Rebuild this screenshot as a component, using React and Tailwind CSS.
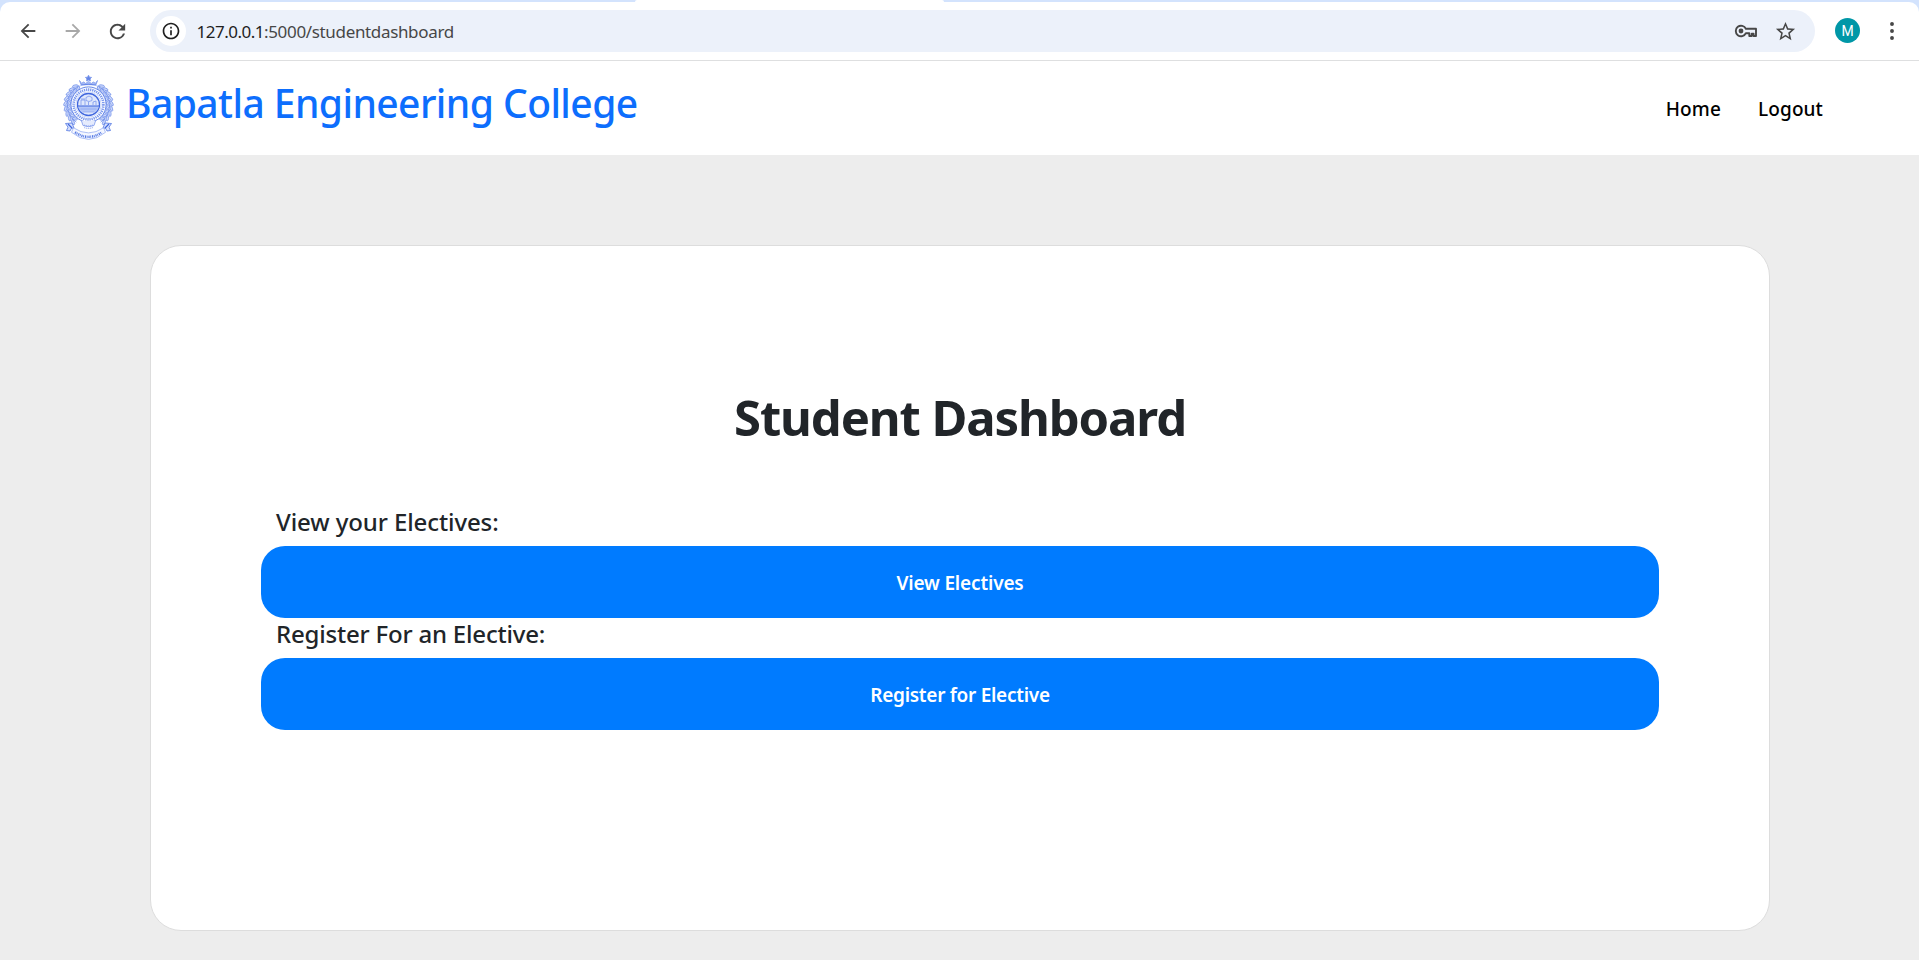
import { MdArrowBack, MdArrowForward, MdInfoOutline, MdRefresh, MdStarBorder } from "react-icons/md";

function KeyIcon() {
  return (
    <svg className="h-[14px] w-6" viewBox="0 0 24 14" fill="none" stroke="#474747" strokeWidth="1.9">
      <path d="M11.9 4.8A5.3 5.3 0 1 0 11.9 9.2H15.3V12H17.7V9.8H19.6V12H22V4.8Z" strokeLinejoin="round" />
      <circle cx="7" cy="7" r="2.4" fill="#474747" stroke="none" />
    </svg>
  );
}

function DotsIcon() {
  return (
    <svg className="h-[18px] w-1" viewBox="0 0 4 18" fill="#474747">
      <circle cx="2" cy="2" r="1.95" />
      <circle cx="2" cy="9" r="1.95" />
      <circle cx="2" cy="16" r="1.95" />
    </svg>
  );
}

const LEAF_ANGLES = [-48, -35, -22, -9, 4, 17, 30, 43, 55];

function Wreath() {
  return LEAF_ANGLES.map((a) => (
    <g key={a} transform={`rotate(${-a} 25.5 30)`}>
      <ellipse cx="45" cy="29" rx="2.9" ry="1.2" transform="rotate(-55 45 29)" />
      <ellipse cx="48.6" cy="30" rx="2.8" ry="1.2" transform="rotate(-115 48.6 30)" />
      <path d="M46.400 27.500v5" />
    </g>
  ));
}

function Emblem() {
  return (
    <svg className="h-[66px] w-[51px] overflow-visible" viewBox="0 0 51 66" fill="none" stroke="#7593eb" strokeWidth="0.75">
      {/* crown */}
      <path d="M25.5 0.2l1 2 2.1.2-1.5 1.5.4 2-2-.9-2 .9.4-2-1.5-1.5 2.1-.2z" fill="#6585e6" />
      <path d="M16.5 5.5l2 2.8 2.2-1.3 2 1.5 2.8-2.3 2.8 2.3 2-1.5 2.2 1.3 2-2.8-1.5 4.2h-15z" fill="#a9bdf5" />
      <path d="M17.5 10.3q8-2.3 16 0" stroke="#5478e4" />
      {/* laurel */}
      <g fill="#c9d6fa">
        <Wreath />
        <g transform="translate(51 0) scale(-1 1)">
          <Wreath />
        </g>
      </g>
      {/* seal */}
      <circle cx="25.5" cy="29.5" r="17.6" fill="#fff" stroke="#5579e4" strokeWidth="0.9" />
      <circle cx="25.5" cy="29.5" r="14.9" stroke="#7d9aee" strokeWidth="2.6" strokeDasharray="1.3 0.8" />
      <circle cx="25.5" cy="29.5" r="12.7" stroke="#a9bdf5" strokeWidth="0.6" />
      <circle cx="25.5" cy="29.5" r="11" fill="#dfe7fc" stroke="#3f66de" strokeWidth="1.3" />
      <path d="M15 31h21a10.6 10.6 0 0 1-3.2 6H18.2a10.6 10.6 0 0 1-3.2-6z" fill="#b3c5f7" stroke="none" />
      <path d="M15 31h21" stroke="#4a70e0" strokeWidth="1.1" />
      <path d="M18 30v-5h4v5M23 22.5l3-1.5 3 1.5v3l-3 1-3-1zM30 30v-3l3-1v4M25.5 27v3M19 25v-2M21 25v-2" />
      <path d="M17.5 34h16M20 37h11" stroke="#8da6f0" />
      {/* base ornament */}
      <path d="M18.5 46l1.5 4.500q5.500 2.500 11 0L32.500 46" fill="#e5ebfd" />
      <path d="M21 50q4.5 1.8 9 0M21 52.5q4.5 1.8 9 0" strokeDasharray="1.3 0.7" />
      {/* ribbon */}
      <path
        d="M2.5 48.5l6.5-.5 2 5q-3.5-.5-4 3l-3.5-.5 1.5-3.300zM48.500 48.500l-6.500-.5-2 5q3.500-.5 4 3l3.500-.5-1.500-3.300z"
        fill="#d6e0fc"
        stroke="#4a70e0"
      />
      <path d="M5 49l4 4M46 49l-4 4" stroke="#3f66de" strokeWidth="1.2" />
      <path d="M10.5 52.8Q25.5 63 40.5 52.8l2 4.5Q25.5 71.500 8.500 57.300z" fill="#f4f7ff" stroke="#93abf1" />
      <path d="M12 57.2Q25.5 66.5 39 57.2" stroke="#5579e4" strokeWidth="2.4" strokeDasharray="1.2 0.7 0.8 0.9" />
    </svg>
  );
}

function BrowserBar() {
  return (
    <div className="bg-[#d3e3fd]">
      <div className="h-[2px] pl-[635px]">
        <div className="h-[2px] w-[309px] rounded-t-[2px] bg-white" />
      </div>
      <div className="flex h-[59px] items-start rounded-t-[10px] border-b border-[#dedfe0] bg-white pt-2">
        <div className="flex h-[42px] w-[150px] items-center pl-[17px] text-[22px] text-[#474747]">
          <MdArrowBack />
          <MdArrowForward className="ml-[22.500px] text-[#a8a8a8]" />
          <MdRefresh className="ml-[22.500px] text-[23px]" />
        </div>
        <div className="flex h-[42px] w-[1665px] items-center rounded-full bg-[#ecf1fa] pr-[18.5px] pl-[6px]">
          <div className="flex size-[30px] items-center justify-center rounded-full bg-white">
            <MdInfoOutline className="text-[20px] text-[#1f1f1f]" />
          </div>
          <p className="ml-[10.5px] pt-px text-[17px] leading-6 text-[#474747]">
            <span className="tracking-[-0.5px] text-[#1f1f1f]">127.0.0.1</span>
            <span className="tracking-[-0.34px]">:5000/studentdashboard</span>
          </p>
          <div className="ml-auto flex items-center gap-[16px] text-[#474747]">
            <KeyIcon />
            <MdStarBorder className="text-[23px]" />
          </div>
        </div>
        <div className="mt-2 ml-5 flex size-[25px] items-center justify-center rounded-full bg-[#0097a7] font-['Roboto',sans-serif] text-[14px] leading-none text-white">
          M
        </div>
        <div className="mt-3 ml-[30px]">
          <DotsIcon />
        </div>
      </div>
    </div>
  );
}

function Navbar() {
  return (
    <nav className="flex h-[94px] items-start bg-white pr-[96px] pl-[62.5px] font-medium">
      <div className="pt-[14px]">
        <Emblem />
      </div>
      <a className="mt-[18px] ml-[12.500px] text-[39px] leading-[48px] tracking-[-0.56px] whitespace-nowrap text-[#0d6efd]">
        Bapatla Engineering College
      </a>
      <div className="mt-[33.5px] ml-auto flex gap-[37px] text-[19px] leading-7 text-black">
        <a className="tracking-[0.15px]">Home</a>
        <a className="tracking-[0.1px]">Logout</a>
      </div>
    </nav>
  );
}

function Action({ label, labelClass, children, buttonClass }) {
  return (
    <div>
      <p className={`h-10 pt-px pl-[15px] text-[24px] leading-[29px] font-medium text-[#212529] ${labelClass}`}>{label}</p>
      <button
        className={`flex h-[72px] w-full items-center justify-center rounded-[24px] bg-[#007bff] pt-[3px] text-[19px] font-semibold text-white ${buttonClass}`}
      >
        {children}
      </button>
    </div>
  );
}

export default function App() {
  return (
    <div className="flex h-[960px] flex-col overflow-hidden bg-[#ededed] font-['Noto_Sans','Open_Sans',sans-serif]">
      <BrowserBar />
      <Navbar />
      <main className="mt-[90px] mr-[149px] ml-[150px] h-[686px] rounded-[31px] border border-[#dddddd] bg-white px-[110px] pt-[141px]">
        <h1 className="text-center text-[49px] leading-[60px] font-bold tracking-[-1.1px] text-[#212529]">
          Student Dashboard
        </h1>
        <div className="mt-[59px]">
          <Action label="View your Electives:" labelClass="tracking-[-0.1px]" buttonClass="tracking-[-0.16px]">
            View Electives
          </Action>
          <Action label="Register For an Elective:" labelClass="tracking-[-0.2px]" buttonClass="tracking-[-0.27px]">
            Register for Elective
          </Action>
        </div>
      </main>
    </div>
  );
}
